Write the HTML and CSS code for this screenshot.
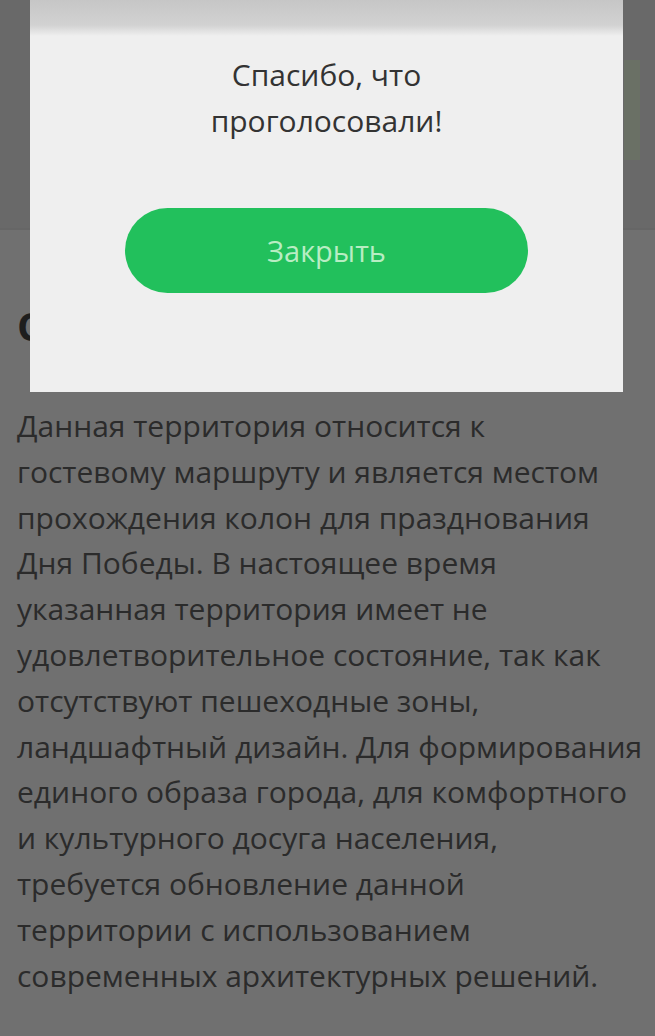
FILE: index.html
```html
<!DOCTYPE html>
<html lang="ru">
<head>
<meta charset="utf-8">
<title>Голосование</title>
<link rel="stylesheet" href="styles.css">
</head>
<body>
<div class="page">
  <div class="hero">
    <div class="hero-tint"></div>
  </div>
  <section class="content">
    <h2 class="heading">Описание</h2>
    <p class="text">Данная территория относится к<br>гостевому маршруту и является местом<br>прохождения колон для празднования<br>Дня Победы. В настоящее время<br>указанная территория имеет не<br>удовлетворительное состояние, так как<br>отсутствуют пешеходные зоны,<br>ландшафтный дизайн. Для формирования<br>единого образа города, для комфортного<br>и культурного досуга населения,<br>требуется обновление данной<br>территории с использованием<br>современных архитектурных решений.</p>
  </section>
</div>
<div class="modal">
  <div class="modal-shade"></div>
  <p class="modal-title">Спасибо, что<br>проголосовали!</p>
  <button class="modal-btn" type="button">Закрыть</button>
</div>
</body>
</html>
```
FILE: styles.css
```css
html, body {
  margin: 0;
  padding: 0;
}
body {
  background: #707070;
  font-family: "Open Sans", "DejaVu Sans", sans-serif;
  width: 655px;
  height: 1036px;
  overflow: hidden;
}
.page {
  display: flex;
  flex-direction: column;
}
.hero {
  height: 228px;
  background: #696969;
  border-bottom: 2px solid #666;
  display: flex;
  justify-content: flex-end;
  align-items: flex-start;
}
.hero-tint {
  width: 16px;
  height: 100px;
  margin-top: 60px;
  margin-right: 15px;
  background: #6a7065;
}
.content {
  padding: 0 10px 0 17px;
}
.heading {
  margin: 72px 0 47px;
  font-size: 40px;
  line-height: 48px;
  font-weight: 700;
  color: #1e1e1e;
  height: 54px;
}
.text {
  margin: 0;
  font-size: 30px;
  line-height: 45.8px;
  color: #2b2b2b;
  white-space: nowrap;
}
.modal {
  position: fixed;
  top: 0;
  left: 30px;
  width: 593px;
  height: 392px;
  background: #efefef;
  display: flex;
  flex-direction: column;
  align-items: center;
  box-sizing: border-box;
  padding-top: 52px;
}
.modal-shade {
  position: absolute;
  top: 0;
  left: 0;
  right: 0;
  height: 36px;
  background: linear-gradient(#c6c6c6 0%, #d2d2d2 70%, #efefef 100%);
}
.modal-title {
  position: relative;
  margin: 0;
  font-size: 30px;
  line-height: 46px;
  color: #333;
  text-align: center;
}
.modal-btn {
  margin-top: 64px;
  width: 403px;
  height: 85px;
  border: 0;
  border-radius: 43px;
  background: #22c05c;
  color: #b8edc3;
  font-family: "Open Sans", "DejaVu Sans", sans-serif;
  font-size: 29px;
  padding: 0;
}
```
